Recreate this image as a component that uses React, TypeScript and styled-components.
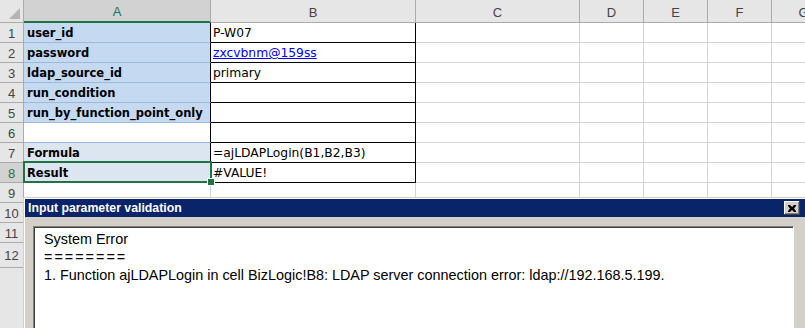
import React from "react";
import styled, {createGlobalStyle, css} from "styled-components";

const GlobalStyle = createGlobalStyle`
    html, body {
        margin: 0;
        padding: 0;
        background: #fff;
    }

    * {
        box-sizing: border-box;
    }
`

const GREEN = "#217346"
const GRID = "#d4d4d4"
const HEADER_LINE = "#ababab"

const StyledSheet = styled.div`
    position: relative;

    width: 805px;
    height: 328px;

    overflow: hidden;

    background: #fff;

    font-family: "DejaVu Sans", "Liberation Sans", sans-serif;
`

const StyledGrid = styled.div`
    display: grid;

    grid-template-columns: 24px 187px 205px 164px 64px 64px 64px 64px;
    grid-template-rows: 23px repeat(11, 20px) 25px 60px;
`

const StyledCorner = styled.div`
    position: relative;

    background: #e6e6e6;

    border-right: 1px solid ${HEADER_LINE};
    border-bottom: 1px solid ${HEADER_LINE};

    &::after {
        content: "";
        position: absolute;
        right: 3px;
        bottom: 3px;

        width: 0;
        height: 0;

        border-left: 11px solid transparent;
        border-bottom: 11px solid #b4b4b4;
    }
`

const StyledColHeader = styled.div<{ $active?: boolean }>`
    display: flex;

    align-items: center;
    justify-content: center;

    padding-top: 2px;

    background: ${({$active}) => $active ? "#d2d2d2" : "#e6e6e6"};
    color: ${({$active}) => $active ? GREEN : "#444"};

    border-right: 1px solid ${HEADER_LINE};
    border-bottom: ${({$active}) => $active ? `2px solid ${GREEN}` : `1px solid ${HEADER_LINE}`};

    font-family: "Liberation Sans", sans-serif;
    font-size: 13px;
`

const StyledRowHeader = styled.div<{ $active?: boolean }>`
    display: flex;

    align-items: center;
    justify-content: center;

    padding-top: 1px;

    background: ${({$active}) => $active ? "#d2d2d2" : "#e6e6e6"};
    color: ${({$active}) => $active ? GREEN : "#444"};

    border-right: 1px solid ${HEADER_LINE};
    border-bottom: 1px solid ${HEADER_LINE};

    font-family: "Liberation Sans", sans-serif;
    font-size: 13px;
`

const StyledBlankHeader = styled.div`
    background: #e6e6e6;

    border-right: 1px solid ${HEADER_LINE};
`

type Fill = "label" | "result" | "none"

const fills: Record<Fill, string> = {
	label: "#c5d9f1",
	result: "#dce6f1",
	none: "#fff",
}

const StyledLabelCell = styled.div<{ $fill: Fill, $boxed?: boolean }>`
    position: relative;

    display: flex;

    align-items: flex-end;

    padding: 0 0 2px 3px;

    background: ${({$fill}) => fills[$fill]};

    border-right: 1px solid ${({$boxed}) => $boxed ? "#000" : GRID};
    border-bottom: 1px solid #9db9dd;

    font-size: 11.5px;
    font-weight: bold;
    white-space: nowrap;

    ${({$boxed}) => !$boxed && css`
        border-bottom-color: ${GRID};
    `}
`

const StyledValueCell = styled.div<{ $boxed?: boolean }>`
    display: flex;

    align-items: flex-end;

    padding: 0 0 2px 2px;

    border-right: 1px solid ${({$boxed}) => $boxed ? "#000" : GRID};
    border-bottom: 1px solid ${({$boxed}) => $boxed ? "#000" : GRID};

    font-size: 12.3px;
    white-space: nowrap;
`

const StyledCell = styled.div`
    border-right: 1px solid ${GRID};
    border-bottom: 1px solid ${GRID};
`

const StyledLink = styled.span`
    color: #0000ff;

    text-decoration: underline;
`

const StyledSelection = styled.div`
    position: absolute;
    top: -2px;
    left: -1px;
    right: -2px;
    bottom: -1px;

    border: 2px solid ${GREEN};

    &::after {
        content: "";
        position: absolute;
        right: -4px;
        bottom: -4px;

        width: 6px;
        height: 6px;

        background: ${GREEN};

        outline: 1px solid #fff;
    }
`

const StyledDialog = styled.div`
    position: absolute;
    top: 197px;
    left: 23px;

    width: 790px;
    height: 140px;

    padding: 1px 0 0 1px;

    background: #d4d0c8;

    border-top: 1px solid #d4d0c8;
    border-left: 1px solid #d4d0c8;

    box-shadow: inset 1px 1px 0 #fff;
`

const StyledTitleBar = styled.div`
    display: flex;

    align-items: center;
    justify-content: space-between;

    height: 18px;

    padding: 0 13px 0 3px;

    background: #0a246a;
    color: #fff;

    font-family: "Liberation Sans", sans-serif;
    font-size: 12.3px;
    font-weight: bold;
`

const StyledCloseButton = styled.div`
    display: flex;

    align-items: center;
    justify-content: center;

    width: 16px;
    height: 14px;

    background: #d4d0c8;

    box-shadow: inset -1px -1px 0 #404040, inset 1px 1px 0 #fff, inset -2px -2px 0 #808080;
`

const StyledDialogBody = styled.div`
    padding: 9px 0 0 8px;
`

const StyledMessage = styled.div`
    width: 761px;
    height: 120px;

    padding: 3px 0 0 10px;

    background: #fff;

    border-top: 1px solid #808080;
    border-left: 1px solid #808080;
    border-right: 1px solid #fff;

    box-shadow: inset 1px 1px 0 #404040;

    font-family: "Liberation Sans", sans-serif;
    font-size: 14.4px;
    line-height: 18px;
    color: #000;
`

const StyledRule = styled.div`
    letter-spacing: 2px;
`

const columns = ["A", "B", "C", "D", "E", "F", "G"]

type Row = {
	label: string
	value: string
	fill: Fill
	link?: boolean
	active?: boolean
}

const rows: Row[] = [
	{label: "user_id", value: "P-W07", fill: "label"},
	{label: "password", value: "zxcvbnm@159ss", fill: "label", link: true},
	{label: "ldap_source_id", value: "primary", fill: "label"},
	{label: "run_condition", value: "", fill: "label"},
	{label: "run_by_function_point_only", value: "", fill: "label"},
	{label: "", value: "", fill: "none"},
	{label: "Formula", value: "=ajLDAPLogin(B1,B2,B3)", fill: "result"},
	{label: "Result", value: "#VALUE!", fill: "result", active: true},
]

const CloseIcon = () => (
	<svg width="8" height="7" viewBox="0 0 8 7">
		<path d="M0 0h2l2 2 2-2h2v1L6 3.5 8 6v1H6L4 5 2 7H0V6l2-2.5L0 1z" fill="#000"/>
	</svg>
)

const EmptyCells = () => (
	<>
		{columns.slice(2).map(c => <StyledCell key={c}/>)}
	</>
)

export default function App() {
	return (
		<>
			<GlobalStyle/>
			<StyledSheet>
				<StyledGrid>
					<StyledCorner/>
					{columns.map(c => (
						<StyledColHeader key={c} $active={c === "A"}>{c}</StyledColHeader>
					))}

					{rows.map((row, i) => (
						<React.Fragment key={i}>
							<StyledRowHeader $active={row.active}>{i + 1}</StyledRowHeader>
							<StyledLabelCell $fill={row.fill} $boxed>
								{row.label}
								{row.active && <StyledSelection/>}
							</StyledLabelCell>
							<StyledValueCell $boxed>
								{row.link ? <StyledLink>{row.value}</StyledLink> : row.value}
							</StyledValueCell>
							<EmptyCells/>
						</React.Fragment>
					))}

					{[9, 10, 11, 12].map(n => (
						<React.Fragment key={n}>
							<StyledRowHeader>{n}</StyledRowHeader>
							<StyledCell/>
							<StyledCell/>
							<EmptyCells/>
						</React.Fragment>
					))}
					<StyledBlankHeader/>
				</StyledGrid>

				<StyledDialog>
					<StyledTitleBar>
						<span>Input parameter validation</span>
						<StyledCloseButton><CloseIcon/></StyledCloseButton>
					</StyledTitleBar>
					<StyledDialogBody>
						<StyledMessage>
							<div>System Error</div>
							<StyledRule>========</StyledRule>
							<div>1. Function ajLDAPLogin in cell BizLogic!B8: LDAP server connection error: ldap://192.168.5.199.</div>
						</StyledMessage>
					</StyledDialogBody>
				</StyledDialog>
			</StyledSheet>
		</>
	)
}
